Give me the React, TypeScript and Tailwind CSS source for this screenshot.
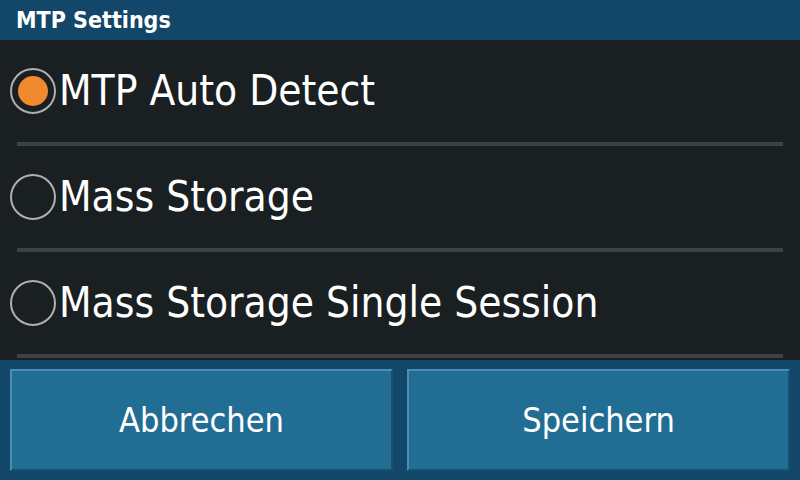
import React, { useState } from 'react'

const options = ['MTP Auto Detect', 'Mass Storage', 'Mass Storage Single Session']

const App: React.FC = () => {
  const [selected, setSelected] = useState(0)

  return (
    <div
      className="w-[800px] h-[480px] flex flex-col bg-[#1a1f22] overflow-hidden"
      style={{ fontFamily: '"DejaVu Sans Condensed", "DejaVu Sans", sans-serif' }}
    >
      {/* Title bar */}
      <div className="h-[40px] flex items-center pl-[16px] pt-[1px] bg-[#12476a] text-white font-bold text-[23px] leading-none">
        MTP Settings
      </div>

      {/* Options */}
      <div className="flex-1 flex flex-col">
        {options.map((label, i) => (
          <div key={label} className="flex flex-col">
            <button
              onClick={() => setSelected(i)}
              className="h-[102px] flex items-center pl-[10px] text-left"
            >
              <span className="w-[46px] h-[46px] shrink-0 rounded-full border-2 border-[#aeb0b1] flex items-center justify-center">
                {selected === i && <span className="w-[30px] h-[30px] rounded-full bg-[#f18a2f]" />}
              </span>
              <span className="ml-[3px] text-white text-[42px] leading-none">{label}</span>
            </button>
            <div className="mx-[17px] h-[4px] bg-[#3c4245]" />
          </div>
        ))}
      </div>

      {/* Footer buttons */}
      <div className="h-[120px] bg-[#13476a] flex gap-[14px] px-[10px] py-[9px]">
        {['Abbrechen', 'Speichern'].map((label) => (
          <button
            key={label}
            className="flex-1 flex items-center justify-center bg-[#216d94] border-t-2 border-l-2 border-[#4a8fb3] border-r-2 border-r-[#16506f] border-b-2 border-b-[#16506f] text-white text-[34px] leading-none"
          >
            {label}
          </button>
        ))}
      </div>
    </div>
  )
}

export default App
